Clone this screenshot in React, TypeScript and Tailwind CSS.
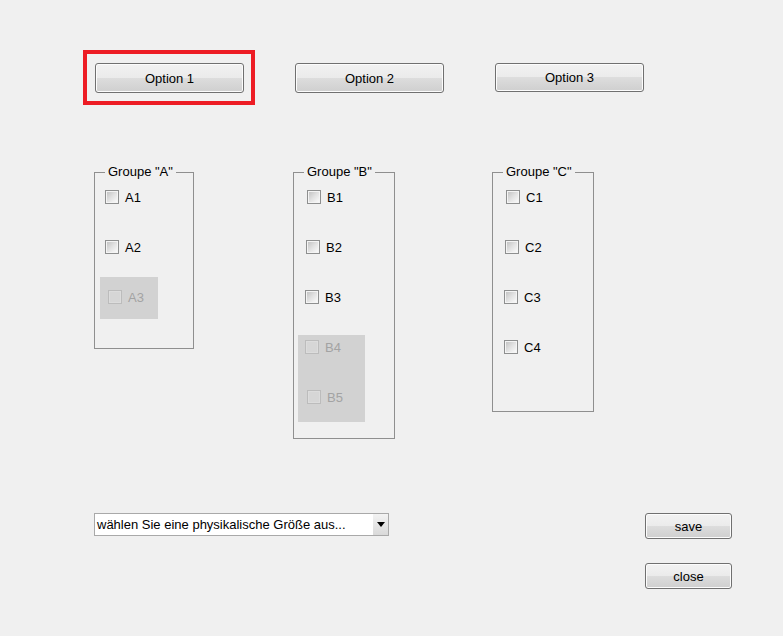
import React from 'react'

const btn =
  'flex items-center justify-center rounded-[3px] border border-[#707070] bg-[linear-gradient(to_bottom,#f2f2f2_0%,#ebebeb_50%,#dddddd_50%,#cfcfcf_100%)] text-[13px] text-black leading-none shadow-[inset_0_0_0_1px_#fcfcfc]'

type Row = { label: string; ml: string; mt: string; disabled?: boolean }

function Check({ label, ml, mt, disabled }: Row) {
  return (
    <div className={`flex h-[13px] items-center ${ml} ${mt}`}>
      <div
        className={`h-[14px] w-[14px] border ${disabled ? 'border-[#bcbcbc]' : 'border-[#8e8f8f]'}`}
      >
        <div
          className={`h-full w-full border ${
            disabled
              ? 'border-[#dcdcdc] bg-[#d6d6d6]'
              : 'border-[#f4f4f4] bg-[linear-gradient(135deg,#c4c4c4_0%,#e2e2e2_50%,#f9f9f9_100%)]'
          }`}
        />
      </div>
      <span className={`ml-[6px] pt-[2px] leading-[13px] ${disabled ? 'text-[#a3a3a3]' : 'text-black'}`}>
        {label}
      </span>
    </div>
  )
}

function Group({ title, className, children }: { title: string; className: string; children: React.ReactNode }) {
  return (
    <fieldset className={`border border-[#8f8f8f] ${className}`}>
      <legend className="ml-[10px] px-[3px] text-[13px] leading-[14px] text-black">{title}</legend>
      {children}
    </fieldset>
  )
}

export default function App() {
  return (
    <div className="h-[636px] w-[783px] overflow-hidden bg-[#f0f0f0] text-[13px] font-['Liberation_Sans',Arial,sans-serif]">
      {/* top buttons */}
      <div className="flex items-start pl-[83px] pt-[50px]">
        <div className="h-[55px] w-[172px] border-4 border-[#ed1c24] pl-[8px] pt-[9px]">
          <button className={`${btn} h-[30px] w-[149px]`}>Option 1</button>
        </div>
        <button className={`${btn} ml-[40px] mt-[13px] h-[30px] w-[149px]`}>Option 2</button>
        <button className={`${btn} ml-[51px] mt-[13px] h-[29px] w-[149px]`}>Option 3</button>
      </div>

      {/* groups */}
      <div className="mt-[60px] flex items-start pl-[94px]">
        <Group title={'Groupe "A"'} className="h-[184px] w-[100px]">
          <Check label="A1" ml="ml-[10px]" mt="mt-[11px]" />
          <Check label="A2" ml="ml-[10px]" mt="mt-[37px]" />
          <div className="ml-[5px] mt-[24px] h-[42px] w-[58px] bg-[#d2d2d2] pl-[8px] pt-[13px]">
            <Check label="A3" ml="ml-0" mt="mt-0" disabled />
          </div>
        </Group>

        <Group title={'Groupe "B"'} className="ml-[99px] h-[274px] w-[102px]">
          <Check label="B1" ml="ml-[13px]" mt="mt-[11px]" />
          <Check label="B2" ml="ml-[12px]" mt="mt-[37px]" />
          <Check label="B3" ml="ml-[11px]" mt="mt-[37px]" />
          <div className="ml-[4px] mt-[32px] h-[87px] w-[67px] bg-[#d2d2d2] pt-[5px]">
            <Check label="B4" ml="ml-[7px]" mt="mt-0" disabled />
            <Check label="B5" ml="ml-[9px]" mt="mt-[37px]" disabled />
          </div>
        </Group>

        <Group title={'Groupe "C"'} className="ml-[97px] h-[247px] w-[102px]">
          <Check label="C1" ml="ml-[13px]" mt="mt-[11px]" />
          <Check label="C2" ml="ml-[12px]" mt="mt-[37px]" />
          <Check label="C3" ml="ml-[11px]" mt="mt-[37px]" />
          <Check label="C4" ml="ml-[11px]" mt="mt-[37px]" />
        </Group>
      </div>

      {/* bottom row */}
      <div className="mt-[74px] flex items-start pl-[94px]">
        <div className="flex h-[23px] w-[295px] items-stretch border border-[#a9a9a9] bg-white">
          <div className="flex-1 pl-[2px] leading-[21px] text-black">wählen Sie eine physikalische Größe aus...</div>
          <div className="flex w-[15px] items-center justify-center bg-[linear-gradient(to_bottom,#f3f3f3,#d9d9d9)]">
            <svg width="8" height="5" viewBox="0 0 8 5">
              <path d="M0 0H8L4 5Z" fill="#000" />
            </svg>
          </div>
        </div>
        <div className="ml-[256px] flex flex-col">
          <button className={`${btn} h-[26px] w-[87px]`}>save</button>
          <button className={`${btn} mt-[24px] h-[26px] w-[87px]`}>close</button>
        </div>
      </div>
    </div>
  )
}
